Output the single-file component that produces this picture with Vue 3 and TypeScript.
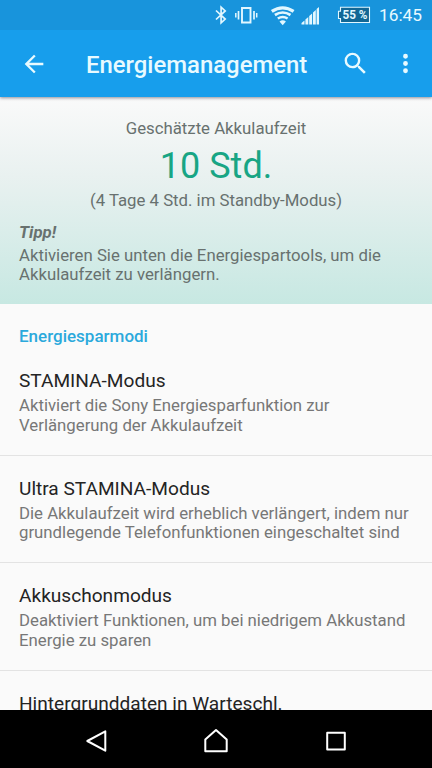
<script setup lang="ts">
interface Mode {
  title: string
  lines: string[]
}

const modes: Mode[] = [
  { title: 'STAMINA-Modus', lines: ['Aktiviert die Sony Energiesparfunktion zur', 'Verlängerung der Akkulaufzeit'] },
  { title: 'Ultra STAMINA-Modus', lines: ['Die Akkulaufzeit wird erheblich verlängert, indem nur', 'grundlegende Telefonfunktionen eingeschaltet sind'] },
  { title: 'Akkuschonmodus', lines: ['Deaktiviert Funktionen, um bei niedrigem Akkustand', 'Energie zu sparen'] },
  { title: 'Hintergrunddaten in Warteschl.', lines: [] },
]
</script>

<template>
  <div class="screen">
    <header class="top">
      <div class="status">
        <svg class="status-icons" width="180" height="30" viewBox="0 0 180 30" fill="none" stroke="#e2f7ff">
          <path d="M3 10.500l9.200 8.600-4.100 3.700V7.200l4.100 3.700L3 19.500" stroke-width="1.700" />
          <path d="M29 8h8.500v14.500H29z" stroke-width="1.900" />
          <path d="M25.500 11v8.500M41 11v8.500" stroke-width="1.700" />
          <path d="M22.800 13v4.500M43.700 13v4.500" stroke-width="1.500" />
          <path d="M58.800 11.300Q69.700 4.300 80.600 11.300" stroke-width="3.300" />
          <path d="M61.900 15Q69.700 10 77.500 15" stroke-width="2.700" />
          <path d="M64.800 18.500Q69.700 15.300 74.600 18.500" stroke-width="2.500" />
          <path d="M66.500 21.400Q69.700 19.200 72.900 21.400L69.700 25.200z" fill="#e2f7ff" stroke="none" />
          <path d="M88.500 24.500v-1.500l3-2.500v4zM92.400 24.500v-5l2.900-2.500v7.500zM96.200 24.500v-8.500l2.900-2.500v11zM100 24.500v-12l2.800-2.500v14.500zM103.600 24.500v-15.500l2.400-2v17.500z" fill="#e2f7ff" stroke="none" />
          <path d="M127.500 7.300h29v15.200h-29v-4h-2v-7.200h2z" fill="#126795" stroke-width="1.100" />
          <text class="percent" x="129.500" y="19.200" textLength="25" lengthAdjust="spacingAndGlyphs">55 %</text>
        </svg>
        <span class="clock">16:45</span>
      </div>
      <div class="toolbar">
        <svg class="back" width="28" height="28" viewBox="0 0 24 24"><path d="M20 11H7.830l5.590-5.590L12 4l-8 8 8 8 1.410-1.410L7.830 13H20v-2z" /></svg>
        <h1>Energiemanagement</h1>
        <svg class="search" width="29" height="29" viewBox="0 0 24 24"><path d="M15.500 14h-.79l-.28-.27A6.471 6.471 0 0 0 16 9.500 6.500 6.500 0 1 0 9.500 16c1.610 0 3.090-.59 4.230-1.570l.27.28v.79l5 4.990L20.490 19l-4.990-5zm-6 0C7.010 14 5 11.990 5 9.500S7.010 5 9.500 5 14 7.010 14 9.500 11.990 14 9.500 14z" /></svg>
        <svg class="more" width="29" height="29" viewBox="0 0 24 24"><path d="M12 8a2 2 0 1 0 0-4 2 2 0 0 0 0 4zm0 2a2 2 0 1 0 0 4 2 2 0 0 0 0-4zm0 6a2 2 0 1 0 0 4 2 2 0 0 0 0-4z" /></svg>
      </div>
    </header>

    <section class="summary">
      <div class="estimate">Geschätzte Akkulaufzeit</div>
      <div class="hours">10 Std.</div>
      <div class="standby">(4 Tage 4 Std. im Standby-Modus)</div>
      <div class="tip">
        <div class="tip-title">Tipp!</div>
        <div>Aktivieren Sie unten die Energiespartools, um die<br>Akkulaufzeit zu verlängern.</div>
      </div>
    </section>

    <main class="list">
      <h2>Energiesparmodi</h2>
      <article v-for="mode in modes" :key="mode.title" class="mode">
        <h3>{{ mode.title }}</h3>
        <div v-for="line in mode.lines" :key="line" class="line">{{ line }}</div>
      </article>
    </main>

    <nav class="nav">
      <svg width="26" height="26" viewBox="0 0 26 26"><path d="M22.300 3.300v19.400L4.300 13z" /></svg>
      <svg width="26" height="26" viewBox="0 0 26 26"><path d="M2.300 23.200V11.600L13 2l10.700 9.600v11.600z" /></svg>
      <svg width="26" height="26" viewBox="0 0 26 26"><path d="M4.200 4.700h17.600v16.800H4.200z" /></svg>
    </nav>
  </div>
</template>

<style>
body { margin: 0; background: #000; }
</style>

<style scoped>
.screen {
  width: 432px;
  height: 768px;
  display: flex;
  flex-direction: column;
  overflow: hidden;
  background: #fafafa;
  font-family: Roboto, "Liberation Sans", sans-serif;
  font-size: 16.77px;
  line-height: 19.6px;
  color: #777;
}
h1, h2, h3 { margin: 0; font-weight: 400; white-space: nowrap; }
.top {
  flex: none;
  height: 97px;
  background: #179eec;
  color: #e8faff;
  position: relative;
  box-shadow: 0 1px 3px rgba(40, 40, 60, .5);
}
.status {
  height: 30px;
  background: #1894dc;
  display: flex;
  justify-content: flex-end;
  padding-right: 11px;
}
.percent {
  font-family: Roboto, sans-serif;
  font-size: 12.5px;
  font-weight: 700;
  fill: #e2f7ff;
  stroke: none;
}
.clock { width: 42px; margin-left: -14px; font-size: 17.3px; line-height: 31px; white-space: nowrap; }
.toolbar { height: 67px; display: flex; align-items: center; fill: #e8faff; }
.toolbar svg { flex: none; }
.back { margin-left: 19.5px; }
h1 { width: 221px; margin-left: 38.5px; padding-top: 2px; font-size: 23.9px; line-height: 28px; font-weight: 500; }
.search { margin-left: 33.5px; }
.more { margin-left: 21.5px; }
.summary {
  flex: none;
  box-sizing: border-box;
  height: 207px;
  padding-top: 22px;
  text-align: center;
  background: linear-gradient(#fafafa 0%, #e9f1f0 38%, #c7e8e2 100%);
  color: #68716f;
}
.hours { margin-top: 6.5px; font-size: 36px; line-height: 42px; color: #18a584; }
.standby { margin-top: 3.5px; }
.tip { margin-top: 12.5px; padding-left: 19px; text-align: left; }
.tip-title { margin-bottom: 3.5px; font-weight: 700; font-style: italic; }
.list { flex: 1; min-height: 0; overflow: hidden; }
h2 {
  height: 20px;
  padding: 22px 0 2px 19px;
  font-size: 17px;
  line-height: 20px;
  font-weight: 500;
  color: #2ba9dc;
}
.mode {
  box-sizing: border-box;
  height: 107.5px;
  padding: 22px 0 0 19px;
  border-bottom: 1px solid #e3e3e3;
}
h3 { margin-bottom: 4px; font-size: 19.1px; line-height: 22px; color: #242424; }
.line { white-space: nowrap; }
.nav {
  flex: none;
  height: 58px;
  padding-top: 4px;
  box-sizing: border-box;
  background: #000;
  display: flex;
  justify-content: center;
  align-items: center;
  gap: 94px;
}
.nav svg { fill: none; stroke: #fff; stroke-width: 2; stroke-linejoin: round; }
</style>
